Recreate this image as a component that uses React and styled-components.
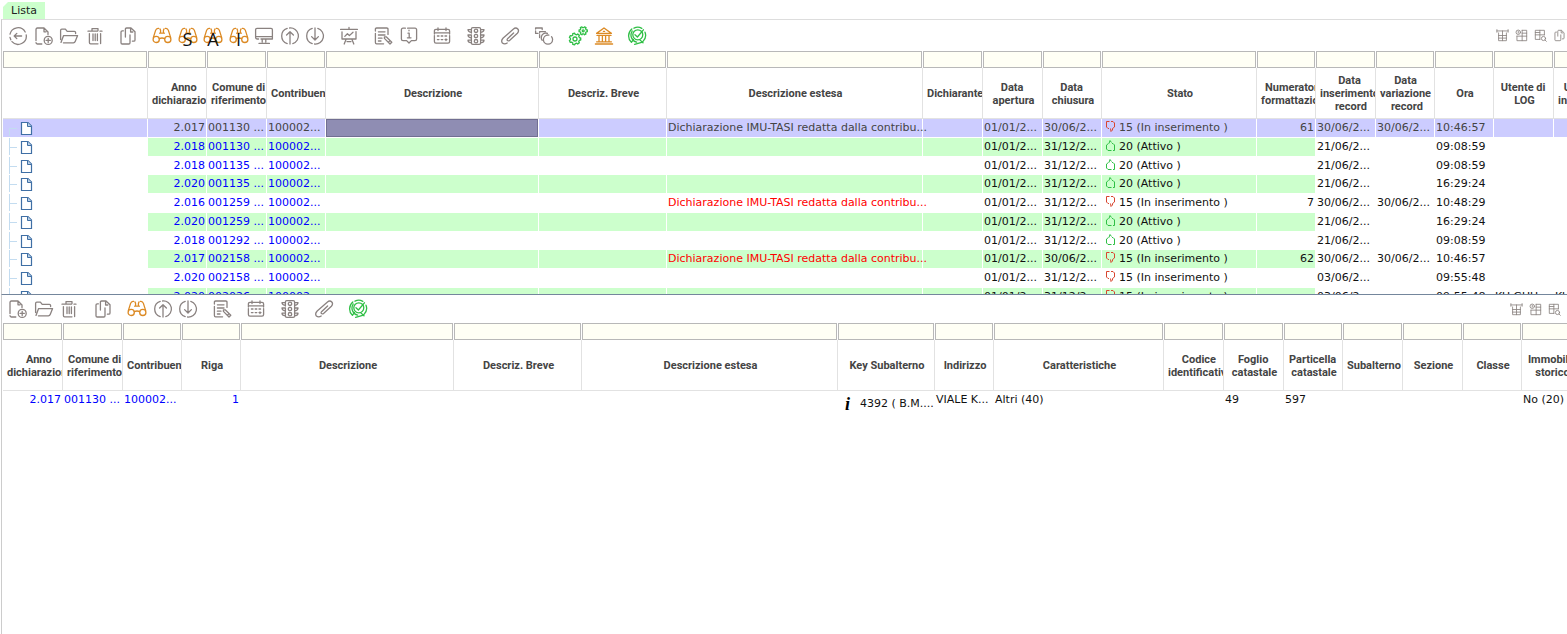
import { useState } from "react";
import styled, { createGlobalStyle, css } from "styled-components";

const GRAY = "#8a8280";
const ORANGE = "#dc8a24";
const GREEN = "#2fbf45";

/* ---------- DATA ---------- */

const masterCols = [
  { key: "tree", label: "", width: 145 },
  { key: "anno", label: "Anno \ndichiarazione", width: 59, num: true, link: true },
  { key: "comune", label: "Comune di\nriferimento", width: 60, link: true },
  { key: "contr", label: "Contribuente", width: 59, link: true },
  { key: "descr", label: "Descrizione", width: 213 },
  { key: "breve", label: "Descriz. Breve", width: 128 },
  { key: "estesa", label: "Descrizione estesa", width: 256, alert: true },
  { key: "dich", label: "Dichiarante", width: 60 },
  { key: "apertura", label: "Data \napertura", width: 60 },
  { key: "chiusura", label: "Data \nchiusura", width: 59 },
  { key: "stato", label: "Stato", width: 155 },
  { key: "numer", label: "Numeratore \nformattazione", width: 59, num: true },
  { key: "insert", label: "Data \ninserimento \nrecord", width: 60, plain: true },
  { key: "variaz", label: "Data \nvariazione \nrecord", width: 59, plain: true },
  { key: "ora", label: "Ora", width: 59, plain: true },
  { key: "utente", label: "Utente di \nLOG", width: 60, plain: true },
  { key: "utenteIns", label: "Utente di \ninserimento", width: 60, plain: true },
];

const ESTESA = "Dichiarazione IMU-TASI redatta dalla contribu...";
const D1 = "01/01/2...";
const D30 = "30/06/2...";
const D31 = "31/12/2...";
const D21 = "21/06/2...";
const INS = "15 (In inserimento )";
const ATT = "20 (Attivo )";

const toRow = ([anno, comune, estesa, chiusura, stato, numer, insert, variaz, ora, utente]) => ({
  anno,
  comune: `${comune} ...`,
  contr: "100002...",
  estesa,
  apertura: D1,
  chiusura,
  stato,
  numer,
  insert,
  variaz,
  ora,
  utente,
  utenteIns: utente,
});

const masterRows = [
  ["2.017", "001130", ESTESA, D30, INS, "61", D30, D30, "10:46:57"],
  ["2.018", "001130", "", D31, ATT, "", D21, "", "09:08:59"],
  ["2.018", "001135", "", D31, ATT, "", D21, "", "09:08:59"],
  ["2.020", "001135", "", D31, ATT, "", D21, "", "16:29:24"],
  ["2.016", "001259", ESTESA, D31, INS, "7", D30, D30, "10:48:29"],
  ["2.020", "001259", "", D31, ATT, "", D21, "", "16:29:24"],
  ["2.018", "001292", "", D31, ATT, "", D21, "", "09:08:59"],
  ["2.017", "002158", ESTESA, D30, INS, "62", D30, D30, "10:46:57"],
  ["2.020", "002158", "", D31, INS, "", "03/06/2...", "", "09:55:48"],
  ["2.020", "002026", "", D31, INS, "", "03/06/2...", "", "09:55:48", "KU GUU..."],
].map(toRow);

const detailCols = [
  { key: "anno", label: "Anno \ndichiarazione", width: 60, num: true, link: true },
  { key: "comune", label: "Comune di\nriferimento", width: 60, link: true },
  { key: "contr", label: "Contribuente", width: 59, link: true },
  { key: "riga", label: "Riga", width: 59, num: true, link: true },
  { key: "descr", label: "Descrizione", width: 213 },
  { key: "breve", label: "Descriz. Breve", width: 128 },
  { key: "estesa", label: "Descrizione estesa", width: 256 },
  { key: "sub", label: "Key Subalterno", width: 97 },
  { key: "indirizzo", label: "Indirizzo", width: 59 },
  { key: "caratt", label: "Caratteristiche", width: 170 },
  { key: "codice", label: "Codice \nidentificativo", width: 60 },
  { key: "foglio", label: "Foglio \ncatastale", width: 60 },
  { key: "particella", label: "Particella \ncatastale", width: 59 },
  { key: "subalterno", label: "Subalterno", width: 60 },
  { key: "sezione", label: "Sezione", width: 60 },
  { key: "classe", label: "Classe", width: 59 },
  { key: "storico", label: "Immobile \nstorico", width: 60 },
];

const detailRows = [
  {
    anno: "2.017",
    comune: "001130 ...",
    contr: "100002...",
    riga: "1",
    sub: "4392 ( B.M....",
    indirizzo: "VIALE K...",
    caratt: "Altri (40)",
    foglio: "49",
    particella: "597",
    storico: "No (20)",
  },
];

/* ---------- ICONS ---------- */

const gearPath = (cx, cy, inner, outer, teeth) => {
  const step = (Math.PI * 2) / teeth;
  const point = (radius, angle) =>
    `${(cx + radius * Math.cos(angle)).toFixed(2)} ${(cy + radius * Math.sin(angle)).toFixed(2)}`;
  const points = [];

  for (let i = 0; i < teeth; i++) {
    const a = i * step;
    points.push(point(inner, a - step * 0.3), point(outer, a - step * 0.2));
    points.push(point(outer, a + step * 0.2), point(inner, a + step * 0.3));
  }
  return `M${points.join("L")}Z`;
};

const icons = {
  back: <path d="M2 8.2A8.2 8.2 0 0 1 17.2 6M18.2 8.8A8.2 8.2 0 0 1 4 15.6M2.8 13.8L2 11.4M13.6 10H6.4M8.8 7.4L6.2 10l2.6 2.6" />,
  add: (
    <>
      <path d="M2 14.5V3.4Q2 2 3.4 2H10l4 4v2.6M10 2.4V5.8h2M2 16.6q0 1.4 1.4 1.4h4.4" />
      <circle cx="14.2" cy="14.4" r="4" />
      <path d="M14.2 12.3v4.2M12.1 14.4h4.2" />
    </>
  ),
  open: <path d="M1.6 13.5V4.4q0-1.2 1.2-1.2H6.4L8.2 5.4h7.2q1.2 0 1.2 1.2v1M2 16.4L4.6 9.6H18.6L16.2 15.6q-.5 1.2-1.8 1.2H4.4" />,
  trash: <path d="M3 5.2H12.6M15 5.2H17M7 5V2.6H13V4.6M4.4 7.6V16.6q0 1.2 1.2 1.2H13M15.6 7.6V17.6M8 8v6.6M10.2 8v6.6M12.4 8v6.6" />,
  copy: <path d="M7.4 11V3.2Q7.4 2 8.6 2H13L17 5.8V14Q17 15.2 15.8 15.2H14.4M12.6 2.4V6H14.8M5.4 4.8H4.2Q3 4.8 3 6V16.8Q3 18 4.2 18H10.8Q12 18 12 16.8V9" />,
  find: (
    <>
      <circle cx="4.2" cy="13.4" r="3.1" />
      <circle cx="15.8" cy="13.4" r="3.1" />
      <path d="M7.4 12.6Q10 11.4 12.6 12.6M1.4 11.4L3.6 4.4Q4.4 2 6.6 2.4M8 3Q8.8 4 8.6 6M7.6 7.2H12.4M18.6 11.4L16.4 4.4Q15.6 2 13.4 2.4M12 3Q11.2 4 11.4 6" />
    </>
  ),
  screen: <path d="M4.6 13H3Q1.6 13 1.6 11.6V3.8Q1.6 2.4 3 2.4H17Q18.4 2.4 18.4 3.8V13H7M1.8 10.6H18M8.2 13.4V16M11.8 13.4V16M5 17.4H15.4" />,
  up: <path d="M7.2 17.6A8 8 0 0 1 7.2 2.4M9.6 2A8 8 0 0 1 12.8 17.6M10 18V6M6.6 9L10 5.8L13.4 9" />,
  down: <path d="M7.2 2.4A8 8 0 0 0 7.2 17.6M9.6 18A8 8 0 0 0 12.8 2.4M10 2V13.8M6.6 10.6L10 14L13.4 10.6" />,
  chart: <path d="M1.6 3.4H18.4M10 1.4V3M3 5.8V13H17V5.6M5.8 10.4L8.4 7.8L10.4 9.6L14 6.2M7 13.4L5.2 18M13 13.4L14.8 18M8 15.6H12" />,
  edit: <path d="M15 8.4V3.2Q15 2 13.8 2H3.6Q2.4 2 2.4 3.2V5M2.4 7.4V16.6Q2.4 17.8 3.6 17.8H10.6M5.4 5.8H12M5.4 9H12M5.4 12.2H9M5.4 15H8M11.4 12.4V10.8H13.2L18.8 16.2L17 18zM15.4 16.2L17 14.6" />,
  info: <path d="M6.4 2.2H4Q2.4 2.2 2.4 3.8V13Q2.4 14.6 4 14.6H7.6L10 17L12.4 14.6H16Q17.6 14.6 17.6 13V3.8Q17.6 2.2 16 2.2H8.6M9 7.2H10.2V11.6M8.4 11.8H12M10 4.2V4.8" />,
  calendar: (
    <>
      <path d="M2.4 8V5Q2.4 3.4 4 3.4H16Q17.6 3.4 17.6 5V8M2.4 6.8H17.6M6 1.8V4.6M14 1.8V4.6M2.4 9.6V15.4Q2.4 17.2 4 17.2H16Q17.6 17.2 17.6 15.4V9.6" />
      <path d="M5.4 10H7M9.2 10H10.8M13 10H14.6M5.4 13.6H7M9.2 13.6H10.8M13 13.6H15M14 12.8V14.6" />
    </>
  ),
  lights: (
    <>
      <path d="M5.4 7V3Q5.4 1.6 6.8 1.6H13.2Q14.6 1.6 14.6 3V17Q14.6 18.4 13.2 18.4H6.8Q5.4 18.4 5.4 17V9M2 3.6H5M2 3.6Q2 6 5 6.4M2 9H5M2 9Q2 11.4 5 11.8M2 14.2H5M2 14.2Q2 16.4 5 16.8M18 3.6H15M18 3.6Q18 6 15 6.4M18 9H15M18 9Q18 11.4 15 11.8M18 14.2H15M18 14.2Q18 16.4 15 16.8" />
      <circle cx="10" cy="4.8" r="1.7" />
      <circle cx="10" cy="10" r="1.7" />
      <circle cx="10" cy="15.2" r="1.7" />
    </>
  ),
  clip: <path d="M13.6 7L7.8 12.4Q6.6 13.8 7.4 14.6Q8.4 15.4 9.8 14.2L17.4 7.2Q19.4 5 17.8 3Q15.8 1 13.2 3.2L3.2 12Q0.6 14.8 2.4 17Q4.6 18.8 7.2 17" />,
  flow: (
    <>
      <path d="M4 7.4H1.6V5M1.6 3V2H8.2V3.6M5.6 7V5.6H11.4M5.6 8.6V11.6" />
      <path d="M8.2 14.4A4.6 4.6 0 0 1 10 7.4Q11.6 6.6 13.4 7.4" />
      <circle cx="14" cy="13.6" r="4.6" strokeDasharray="22 3" />
    </>
  ),
  gears: (
    <>
      <circle cx="7" cy="13" r="2" />
      <path d={gearPath(7, 13, 4.6, 5.8, 7)} />
      <circle cx="15.2" cy="4.8" r="1" />
      <path d={gearPath(15.2, 4.8, 3.2, 4.2, 6)} />
    </>
  ),
  bank: <path d="M2.6 7.4L10 2L17.4 7.4zM9.4 5.4H10.6M3 9.4H17M5 9.6V15.4M8.4 9.6V15.4M11.6 9.6V15.4M15 9.6V15.4M2.6 15.8H17.4M1.4 18H18.6" />,
  check: (
    <>
      <circle cx="10.8" cy="8.8" r="5" />
      <path d="M8 8.8L10.4 11L16.4 3.8M4.8 3A9 9 0 0 0 4.4 16.4M5.2 5A7.4 7.4 0 0 0 9.6 16.2M16 15.4A8.6 8.6 0 0 0 18 6.2M7 2.2A8 8 0 0 1 14.8 2.4M14.6 16.4L7.6 18.4M12.6 13.6L16 16.8M6.4 13.6L4.6 16" />
    </>
  ),
  gridTop: <path d="M1.4 3H18.6M1.4 1V5M18.6 1V5M4 6V18H16V6M4 10H16M4 14H16M10 3V18" />,
  gridSearch: (
    <>
      <circle cx="5" cy="5" r="3.4" />
      <path d="M5 3.4V6.4M11 2H18V18H3V11M3 11H18M11 2V18M11 6.4H18" />
    </>
  ),
  gridRefresh: (
    <>
      <path d="M9 16H2V2H16V9M2 9H16M9 2V16M2 5.4H9" />
      <circle cx="14.6" cy="14.6" r="3.2" />
      <path d="M17 17L19 19" />
    </>
  ),
};

const Icon = ({ name, size = 20, color = GRAY }) => (
  <svg
    width={size}
    height={size}
    viewBox="0 0 20 20"
    fill="none"
    stroke={color}
    strokeWidth="1.3"
    strokeLinecap="round"
    strokeLinejoin="round"
    aria-hidden="true"
  >
    {icons[name]}
  </svg>
);

const TreeNode = ({ first }) => (
  <svg width="36" height="17" viewBox="0 0 36 17" aria-hidden="true">
    <path d={first ? "M6.5 17V9.5H14" : "M6.5 0V17M6.5 9.5H14"} fill="none" stroke="#c3dcf0" />
    <path d="M18.5 3.5H25L28.5 7V15.5H18.5z" fill="#fff" stroke="#3f6fa5" strokeWidth="1.2" />
    <path d="M24.5 3.5V7.5H28.5" fill="#b9d0e6" stroke="#3f6fa5" />
  </svg>
);

const Thumb = ({ up }) => (
  <svg width="11" height="13" viewBox="0 0 11 13" fill="none" stroke={up ? GREEN : "#d8452e"} aria-hidden="true">
    {up ? (
      <path d="M3.5 4.5L1.5 6V10L3 11.5H6.5M4 4.5L5 1.5L6.5 3.5M7 4.5H8L9.5 6V11.5H8" />
    ) : (
      <path d="M4 8.5H3L1.5 7V1.5H4.5M6 1.5H8L9.5 3V7L7.5 8.5V10L6 11.5L5.5 8.5" />
    )}
  </svg>
);

/* ---------- TOOLBARS ---------- */

const masterTools = [
  [["back", "Indietro"], ["add", "Nuovo"], ["open", "Apri"], ["trash", "Elimina"]],
  [["copy", "Copia"]],
  [
    ["find", "Cerca", ORANGE],
    ["find", "Cerca S", ORANGE, "S"],
    ["find", "Cerca A", ORANGE, "A"],
    ["find", "Cerca I", ORANGE, "I"],
    ["screen", "Schermo"],
    ["up", "Su"],
    ["down", "Giù"],
  ],
  [["chart", "Grafico"]],
  [["edit", "Modifica"], ["info", "Informazioni"]],
  [["calendar", "Calendario"]],
  [["lights", "Stato"]],
  [["clip", "Allegati"]],
  [["flow", "Flusso"]],
  [["gears", "Elabora", GREEN], ["bank", "Ente", ORANGE]],
  [["check", "Verifica", GREEN]],
];

const detailTools = [
  [["add", "Nuovo"], ["open", "Apri"], ["trash", "Elimina"]],
  [["copy", "Copia"]],
  [["find", "Cerca", ORANGE], ["up", "Su"], ["down", "Giù"]],
  [["edit", "Modifica"]],
  [["calendar", "Calendario"]],
  [["lights", "Stato"]],
  [["clip", "Allegati"]],
  [["check", "Verifica", GREEN]],
];

const gridTools = [
  ["gridTop", "Colonne"],
  ["gridSearch", "Filtro griglia"],
  ["gridRefresh", "Ripristina griglia"],
];

const Tools = ({ groups, side, compact }) => (
  <Toolbar $compact={compact}>
    {groups.map((group, i) => (
      <ToolGroup key={i}>
        {group.map(([name, title, color, letter]) => (
          <ToolButton key={title} type="button" title={title} aria-label={title}>
            <Icon name={name} color={color} />
            {letter && <Letter>{letter}</Letter>}
          </ToolButton>
        ))}
      </ToolGroup>
    ))}
    <SideTools $compact={compact}>
      {side.map(([name, title]) => (
        <SmallButton key={title} type="button" title={title} aria-label={title}>
          <Icon name={name} size={13} />
        </SmallButton>
      ))}
    </SideTools>
  </Toolbar>
);

/* ---------- GRID ---------- */

const CellContent = ({ col, row, index }) => {
  if (col.key === "tree") return <TreeNode first={index === 0} />;
  if (col.key === "stato") {
    return (
      <Status>
        <Thumb up={row.stato.startsWith("20")} />
        {row.stato}
      </Status>
    );
  }
  if (col.key === "sub") {
    return (
      <KeyInfo>
        <InfoMark>i</InfoMark>
        {row.sub}
      </KeyInfo>
    );
  }
  return row[col.key] || null;
};

const DataGrid = ({ name, cols, rows, selected, onSelect }) => {
  const [filters, setFilters] = useState({});

  return (
    <GridScroll>
      <Table $width={cols.reduce((sum, c) => sum + c.width, 0)}>
        <colgroup>
          {cols.map(c => (
            <Col key={c.key} $width={c.width} />
          ))}
        </colgroup>
        <thead>
          <tr>
            {cols.map(c => (
              <FilterCell key={c.key}>
                <FilterInput
                  type="text"
                  name={`${name}-${c.key}`}
                  aria-label={`Filtro ${c.label || "albero"}`}
                  value={filters[c.key] || ""}
                  onChange={e => setFilters({ ...filters, [c.key]: e.target.value })}
                />
              </FilterCell>
            ))}
          </tr>
          <tr>
            {cols.map(c => (
              <HeadCell key={c.key}>
                <HeadLabel>{c.label}</HeadLabel>
              </HeadCell>
            ))}
          </tr>
        </thead>
        <tbody>
          {rows.map((row, i) => (
            <Row key={i} onClick={() => onSelect && onSelect(i)}>
              {cols.map(c => (
                <Cell
                  key={c.key}
                  $num={c.num}
                  $link={c.link}
                  $alert={c.alert}
                  $tree={c.key === "tree"}
                  $striped={i % 2 === 1 && !c.plain && c.key !== "tree"}
                  $selected={selected === i}
                  $focused={selected === i && c.key === "descr"}
                >
                  <CellContent col={c} row={row} index={i} />
                </Cell>
              ))}
            </Row>
          ))}
        </tbody>
      </Table>
    </GridScroll>
  );
};

const App = () => {
  const [selected, setSelected] = useState(0);

  return (
    <Page>
      <GlobalStyle />
      <TabBar>
        <Tab type="button">Lista</Tab>
      </TabBar>
      <MasterPane>
        <Tools groups={masterTools} side={[...gridTools, ["copy", "Copia griglia"]]} />
        <DataGrid
          name="dichiarazioni"
          cols={masterCols}
          rows={masterRows}
          selected={selected}
          onSelect={setSelected}
        />
      </MasterPane>
      <DetailPane>
        <Tools groups={detailTools} side={gridTools} compact />
        <DataGrid name="immobili" cols={detailCols} rows={detailRows} />
      </DetailPane>
    </Page>
  );
};

export default App;

/* ---------- STYLES ---------- */

const GlobalStyle = createGlobalStyle`
  * {
    box-sizing: border-box;
  }

  body {
    margin: 0;
    background: #ffffff;
    color: #111111;
    font-family: "DejaVu Sans", Verdana, sans-serif;
    font-size: 11px;
    overflow: hidden;
  }
`;

const Page = styled.div`
  display: flex;
  flex-direction: column;
  min-height: 100vh;
`;

const TabBar = styled.div`
  display: flex;
  align-items: flex-end;
  height: 19px;
  padding-left: 3px;
`;

const Tab = styled.button`
  height: 17px;
  padding: 0 8px;
  border: none;
  background: #ccffcc;
  clip-path: polygon(5px 0, 100% 0, 100% 100%, 0 100%, 0 5px);
  color: #222222;
  font: inherit;
`;

const pane = css`
  display: flex;
  flex-direction: column;
  margin-left: 1px;
  padding-left: 1px;
  border-left: 1px solid #cccccc;
  overflow: hidden;
`;

const MasterPane = styled.section`
  ${pane}
  height: 276px;
  border-top: 1px solid #dddddd;
  border-bottom: 1px solid #74869c;
`;

const DetailPane = styled.section`
  ${pane}
  flex: 1;
`;

const Toolbar = styled.div`
  display: flex;
  flex: none;
  align-items: center;
  gap: 8px;
  height: ${({ $compact }) => ($compact ? 28 : 31)}px;
  padding-left: 2px;
`;

const ToolGroup = styled.div`
  display: flex;
`;

const ToolButton = styled.button`
  position: relative;
  display: flex;
  align-items: center;
  justify-content: center;
  width: 26px;
  height: 26px;
  padding: 0;
  border: none;
  background: none;

  &:nth-child(even) {
    width: 25px;
  }
`;

const Letter = styled.span`
  position: absolute;
  inset: 7px 0 0;
  color: #111111;
  font-family: "Open Sans", sans-serif;
  font-size: 18px;
  line-height: 18px;
  text-align: center;
`;

const SideTools = styled.div`
  display: flex;
  gap: 4px;
  margin-left: auto;
  padding-right: ${({ $compact }) => ($compact ? 5 : 0)}px;
`;

const SmallButton = styled.button`
  display: flex;
  justify-content: center;
  width: 15px;
  padding: 0;
  border: none;
  background: none;
`;

const GridScroll = styled.div`
  flex: 1;
  min-height: 0;
  overflow: hidden;
`;

const Table = styled.table`
  width: ${({ $width }) => $width}px;
  table-layout: fixed;
  border-collapse: separate;
  border-spacing: 0;
`;

const Col = styled.col`
  width: ${({ $width }) => $width}px;
`;

const FilterCell = styled.th`
  height: 17px;
  padding: 0 1px 0 0;
`;

const FilterInput = styled.input`
  display: block;
  width: 100%;
  height: 17px;
  padding: 0 2px;
  border: 1px solid #b8b8b8;
  background: #fffff5;
  font: inherit;
  outline: none;
`;

const HeadCell = styled.th`
  height: 51px;
  padding: 1px 0 0 4px;
  border-right: 1px solid #e2e2e2;
  border-bottom: 1px solid #e2e2e2;
  overflow: hidden;
  color: #444444;
  font-family: Roboto, Arial, sans-serif;
  font-size: 11px;
  line-height: 13px;
  text-align: left;
`;

/* grows past the column when the text is too long, so the cell clips it on the right */
const HeadLabel = styled.div`
  width: max-content;
  min-width: 100%;
  padding-right: 2px;
  text-align: center;
  white-space: pre;
`;

const Row = styled.tr`
  height: 19px;

  &:nth-child(4n + 3) {
    height: 18px;
  }
`;

const Cell = styled.td`
  padding: 1px 1px 0;
  border-right: 1px solid #ffffff;
  border-bottom: 1px solid #ffffff;
  background: ${({ $striped }) => ($striped ? "#ccffcc" : "#ffffff")};
  color: ${({ $link, $alert }) => ($link ? "#0000ff" : $alert ? "#ff0000" : "#111111")};
  line-height: 16px;
  text-align: ${({ $num }) => ($num ? "right" : "left")};
  vertical-align: top;
  white-space: nowrap;

  ${({ $tree }) =>
    $tree &&
    css`
      padding: 0;
      line-height: 0;
    `}

  ${({ $selected }) =>
    $selected &&
    css`
      background: #ccccff;
      color: #444444;
    `}

  ${({ $focused }) =>
    $focused &&
    css`
      background: #8f8db3;
      box-shadow: inset 0 0 0 1px #716f92;
    `}
`;

const Status = styled.span`
  display: flex;
  align-items: flex-start;
  gap: 3px;
  padding-left: 2px;
`;

const KeyInfo = styled.span`
  display: flex;
  align-items: center;
  gap: 10px;
  padding: 4px 0 0 6px;
`;

const InfoMark = styled.i`
  color: #000000;
  font-family: "Liberation Serif", serif;
  font-size: 18px;
  font-weight: 700;
`;
